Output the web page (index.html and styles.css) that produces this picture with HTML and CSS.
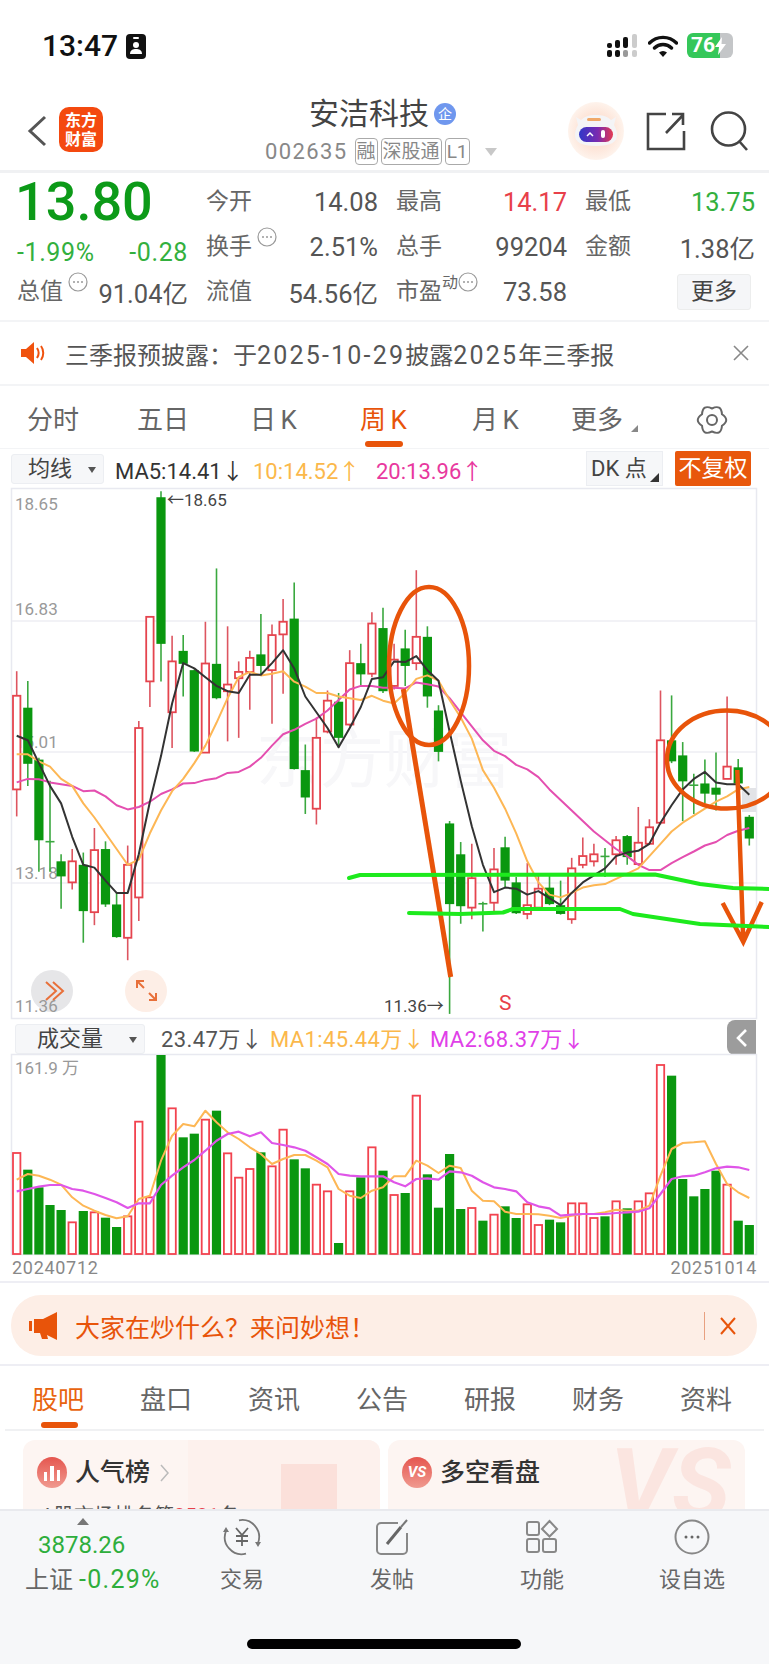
FILE: index.html
```html
<!DOCTYPE html>
<html lang="zh-CN">
<head>
<meta charset="UTF-8" />
<meta name="viewport" content="width=device-width, initial-scale=1" />
<title>安洁科技 002635</title>
<link rel="stylesheet" href="styles.css">
</head>
<body>

<svg class="defs" width="0" height="0">
  <symbol id="dots" viewBox="0 0 20 20">
    <circle cx="10" cy="10" r="9" fill="none" stroke="#999" stroke-width="1.2"/>
    <circle cx="6" cy="10" r="1" fill="#999"/><circle cx="10" cy="10" r="1" fill="#999"/><circle cx="14" cy="10" r="1" fill="#999"/>
  </symbol>
  <defs>
    <radialGradient id="peach"><stop offset="0.55" stop-color="#fde3d6"/><stop offset="1" stop-color="#fef3ec"/></radialGradient>
    <linearGradient id="visor"><stop offset="0" stop-color="#3038c8"/><stop offset="0.55" stop-color="#7a2ab0"/><stop offset="1" stop-color="#e33a52"/></linearGradient>
  </defs>
</svg>

<div class="phone">
  <div class="status">
    <div class="clock">
      <span>13:47</span>
      <svg width="20" height="25" viewBox="0 0 20 25"><rect width="20" height="25" rx="4" fill="#111"/><rect x="7" y="3" width="6" height="2" rx="1" fill="#fff"/><circle cx="10" cy="11" r="3" fill="#fff"/><path d="M4 20c0-4 3-5 6-5s6 1 6 5z" fill="#fff"/></svg>
    </div>
    <div class="status-right">
      <svg width="32" height="23" viewBox="0 0 32 23">
        <rect x="0" y="9" width="5" height="5" rx="2" fill="#111"/><rect x="8" y="6" width="5" height="8" rx="2" fill="#111"/><rect x="16" y="3" width="5" height="11" rx="2" fill="#111"/><rect x="25" y="0" width="5" height="14" rx="2" fill="#ccc"/>
        <rect x="0" y="16" width="5" height="7" rx="2" fill="#111"/><rect x="8" y="16" width="5" height="7" rx="2" fill="#111"/><rect x="16" y="16" width="5" height="7" rx="2" fill="#999"/><rect x="25" y="16" width="5" height="7" rx="2" fill="#ccc"/>
      </svg>
      <svg width="30" height="22" viewBox="0 0 30 22"><path d="M1.5 8a19 19 0 0 1 27 0M6.5 13a12 12 0 0 1 17 0" fill="none" stroke="#111" stroke-width="3.4" stroke-linecap="round"/><path d="M11 17.5a6 6 0 0 1 8 0L15 22z" fill="#111"/></svg>
      <div class="battery"><b>76</b><svg width="11" height="18" viewBox="0 0 11 18"><path d="M7 0 0 10h4l-1 8 8-11H6.500z" fill="#fff"/></svg></div>
    </div>
  </div>

  <header class="nav">
    <svg class="back" width="20" height="32" viewBox="0 0 20 32"><path d="M18 2 3 16l15 14" fill="none" stroke="#555" stroke-width="3"/></svg>
    <div class="logo"><div>东方</div><div>财富</div></div>
    <div class="stock">
      <div class="stock-name">安洁科技<span class="badge">企</span></div>
      <div class="stock-code">002635<span class="tag">融</span><span class="tag">深股通</span><span class="tag">L1</span><i class="caret"></i></div>
    </div>
    <div class="nav-icons">
      <svg class="avatar" width="58" height="58" viewBox="0 0 58 58"><ellipse cx="29" cy="29" rx="28" ry="29" fill="url(#peach)"/><path d="M9 15l5 3c4-4 9-5 15-5s11 1 15 5l5-3-2 8c2 3 3 7 3 10 0 7-6 11-21 11S8 40 8 33c0-3 1-7 3-10z" fill="#f4f4f6"/><rect x="20" y="16" width="14" height="3" rx="1.500" fill="#f0a868"/><rect x="12" y="25" width="34" height="15" rx="7.500" fill="url(#visor)"/><path d="M20 34l3-3 3 3" fill="none" stroke="#fff" stroke-width="1.500"/><rect x="34" y="28" width="4" height="8" rx="2" fill="#fff"/></svg>
      <svg width="40" height="40" viewBox="0 0 40 40"><path d="M20 3H2v35h36V20M20 22 37 4M26 3h11v11" fill="none" stroke="#444" stroke-width="2.600"/></svg>
      <svg width="40" height="40" viewBox="0 0 40 40"><circle cx="18.500" cy="18" r="16.500" fill="none" stroke="#444" stroke-width="2.600"/><path d="m29 30 8 9" stroke="#444" stroke-width="2.600"/></svg>
    </div>
  </header>

  <section class="quote">
    <div class="price">13.80</div>
    <div class="cell"><span>今开</span><b>14.08</b></div>
    <div class="cell"><span>最高</span><b class="up">14.17</b></div>
    <div class="cell"><span>最低</span><b class="down">13.75</b></div>
    <div class="change"><span>-1.99%</span><span>-0.28</span></div>
    <div class="cell"><span>换手<svg class="dots"><use href="#dots"/></svg></span><b>2.51%</b></div>
    <div class="cell"><span>总手</span><b>99204</b></div>
    <div class="cell"><span>金额</span><b>1.38亿</b></div>
    <div class="cell"><span>总值<svg class="dots"><use href="#dots"/></svg></span><b>91.04亿</b></div>
    <div class="cell"><span>流值</span><b>54.56亿</b></div>
    <div class="cell"><span>市盈<sup>动</sup><svg class="dots tight"><use href="#dots"/></svg></span><b>73.58</b></div>
    <div class="cell more-cell"><button class="more">更多</button></div>
  </section>

  <div class="notice">
    <svg width="26" height="24" viewBox="0 0 26 24"><path d="M1 8h5l8-7v22l-8-7H1z" fill="#f0520e"/><path d="M17 7c2 3 2 7 0 10M21 5c3 4 3 10 0 14" fill="none" stroke="#f0520e" stroke-width="2"/></svg>
    <span class="notice-text">三季报预披露：于<span>2025-10-29</span>披露<span>2025</span>年三季报</span>
    <svg width="16" height="16" viewBox="0 0 16 16"><path d="m1 1 14 14M15 1 1 15" stroke="#888" stroke-width="1.600"/></svg>
  </div>

  <nav class="periods">
    <a>分时</a><a>五日</a><a>日 K</a><a class="on">周 K</a><a>月 K</a><a class="has-caret">更多</a>
    <svg class="gear" width="32" height="32" viewBox="0 0 32 32"><path d="M25.960 10.250Q34.500 16 25.960 21.750Q25.250 32 16 27.500Q6.750 32 6.040 21.750Q-2.500 16 6.040 10.250Q6.750 0 16 4.500Q25.250 0 25.960 10.250Z" fill="none" stroke="#666" stroke-width="2"/><circle cx="16" cy="16" r="5" fill="none" stroke="#666" stroke-width="2"/></svg>
  </nav>

  <div class="ma-row">
    <div class="select ma-select">均线<i></i></div>
    <span class="ma-black">MA5:14.41↓</span>
    <span class="ma-orange">10:14.52↑</span>
    <span class="ma-pink">20:13.96↑</span>
    <div class="dk">DK 点</div>
    <div class="fq">不复权</div>
  </div>

  <div class="chart"><svg id="kline" width="769" height="531" viewBox="0 489 769 531"></svg></div>

  <div class="vol-row">
    <div class="select vol-select">成交量<i></i></div>
    <span class="vol-now">23.47万↓</span>
    <span class="vol-ma1">MA1:45.44万↓</span>
    <span class="vol-ma2">MA2:68.37万↓</span>
    <div class="collapse"><svg width="12" height="20" viewBox="0 0 12 20"><path d="M10 2 2 10l8 8" fill="none" stroke="#fff" stroke-width="2.600"/></svg></div>
  </div>

  <div class="chart"><svg id="volume" width="769" height="202" viewBox="0 1055 769 202"></svg></div>

  <div class="dates"><span>20240712</span><span>20251014</span></div>

  <div class="banner-wrap">
    <div class="banner">
      <svg width="30" height="28" viewBox="0 0 30 28"><rect x="0" y="9" width="3" height="10" fill="#e8540a"/><path d="M5 7h9L28 0v28L18 23l1 4h-6l-2-6H5z" fill="#e8540a"/></svg>
      <span class="banner-text">大家在炒什么？来问妙想！</span>
      <i class="banner-sep"></i>
      <svg width="18" height="20" viewBox="0 0 18 20"><path d="m2 2 14 16M16 2 2 18" stroke="#e8540a" stroke-width="2"/></svg>
    </div>
  </div>

  <nav class="tabs">
    <a class="on">股吧</a><a>盘口</a><a>资讯</a><a>公告</a><a>研报</a><a>财务</a><a>资料</a>
  </nav>

  <div class="cards">
    <div class="card">
      <i class="card-art art-fade"></i>
      <i class="card-art art-bars"></i>
      <div class="card-head">
        <span class="round"><svg width="18" height="16" viewBox="0 0 18 16"><path d="M1 7h3v9H1zM7 1h4v15H7zM14 5h3v11h-3z" fill="#fff"/></svg></span>
        人气榜<svg class="chev" width="9" height="18" viewBox="0 0 9 18"><path d="m1 1 7 8-7 8" fill="none" stroke="#bbb" stroke-width="1.500"/></svg>
      </div>
      <p class="card-note">A股市场排名第<em>3581</em>名</p>
    </div>
    <div class="card">
      <i class="card-art art-vs">VS</i>
      <div class="card-head">
        <span class="round vs">VS</span>
        多空看盘
      </div>
    </div>
  </div>

  <footer class="dock">
    <div class="index">
      <i class="index-tri"></i>
      <div class="index-val">3878.26</div>
      <div class="index-name">上证 <span>-0.29%</span></div>
    </div>
    <a class="dock-item">
      <svg width="40" height="40" viewBox="0 0 40 40"><path d="M17 3.300A17 17 0 0 1 36 26M24 36.700A17 17 0 0 1 4 14" fill="none" stroke="#777" stroke-width="1.800"/><path d="M33 25h6l-3 5zM1 15h6l-3-5z" fill="#777"/><path d="m14 11 6 7 6-7M20 18v11M14 19h12M14 24h12" fill="none" stroke="#666" stroke-width="1.800"/></svg>
      <span>交易</span>
    </a>
    <a class="dock-item">
      <svg width="36" height="40" viewBox="0 0 36 40"><path d="M24 6H7a4 4 0 0 0-4 4v23a4 4 0 0 0 4 4h22a4 4 0 0 0 4-4V16" fill="none" stroke="#888" stroke-width="2"/><path d="m13 27 14-17" stroke="#666" stroke-width="3"/><path d="m27 10 6-7" stroke="#777" stroke-width="2"/></svg>
      <span>发帖</span>
    </a>
    <a class="dock-item">
      <svg width="34" height="40" viewBox="0 0 34 40"><g fill="none" stroke="#888" stroke-width="2"><rect x="2" y="5" width="12" height="13" rx="2"/><rect x="2" y="22" width="12" height="13" rx="2"/><rect x="18" y="22" width="13" height="13" rx="2"/><path d="m24.500 4 7.500 8-7.500 7.500-7.500-7.500z"/></g></svg>
      <span>功能</span>
    </a>
    <a class="dock-item">
      <svg width="36" height="40" viewBox="0 0 36 40"><circle cx="18" cy="20" r="16.500" fill="none" stroke="#888" stroke-width="2"/><circle cx="12" cy="20" r="1.500" fill="#666"/><circle cx="18" cy="20" r="1.500" fill="#666"/><circle cx="24" cy="20" r="1.500" fill="#666"/></svg>
      <span>设自选</span>
    </a>
    <i class="home-bar"></i>
  </footer>
</div>

<script src="chart.js"></script>
</body>
</html>
```

FILE: styles.css
```css
* {
  box-sizing: border-box;
}
body {
  margin: 0;
  background: white;
  color: #444;
  font-family: Roboto, 'Noto Sans CJK SC', sans-serif;
}
.defs {
  position: absolute;
}
.phone {
  width: 769px;
  height: 1664px;
  display: flex;
  flex-direction: column;
  overflow: hidden;
}
/* Status bar */
.status {
  height: 95px;
  padding: 33px 36px 0 42px;
  display: flex;
  justify-content: space-between;
  align-items: flex-start;
}
.clock {
  display: flex;
  align-items: center;
  gap: 8px;
  color: #111;
  font-size: 30px;
  font-weight: 500;
  line-height: 26px;
}
.status-right {
  display: flex;
  align-items: center;
  gap: 9px;
}
.battery {
  width: 46px;
  height: 25px;
  padding-left: 4px;
  border-radius: 6px;
  background: linear-gradient(90deg, #35c75a 72%, #c4c6c8 72%);
  display: flex;
  align-items: center;
  color: white;
  font-size: 21px;
  line-height: 25px;
}
/* Title bar */
.nav {
  height: 78px;
  padding-left: 27px;
  padding-right: 19px;
  border-bottom: 3px solid #f0f1f3;
  display: flex;
  align-items: flex-start;
  position: relative;
}
.back {
  margin-top: 20px;
}
.logo {
  margin-left: 12px;
  margin-top: 12px;
  width: 44px;
  height: 45px;
  border-radius: 10px;
  background: #f4490f;
  color: white;
  font-family: 'Noto Sans CJK SC', sans-serif;
  font-size: 16px;
  font-weight: 700;
  text-align: center;
  padding-top: 3px;
}
.logo div {
  height: 19px;
  line-height: 19px;
}
.stock {
  position: absolute;
  left: 265px;
  top: 0;
}
.stock-name {
  padding-left: 44px;
  font-size: 30px;
  line-height: 40px;
  margin-top: -1px;
  display: flex;
  align-items: center;
  color: #444;
}
.badge {
  width: 22px;
  height: 22px;
  margin-left: 5px;
  border-radius: 50%;
  background: #6f97ee;
  color: white;
  font-size: 14px;
  line-height: 22px;
  text-align: center;
}
.stock-code {
  display: flex;
  align-items: center;
  gap: 3px;
  margin-top: 4px;
  color: #888;
  font-size: 22px;
  letter-spacing: 1.4px;
  line-height: 27px;
}
.tag {
  height: 27px;
  padding: 0 1px;
  border: 1px solid #aaa;
  border-radius: 4px;
  color: #888;
  font-size: 19px;
  letter-spacing: 0;
  line-height: 25px;
}
.tag:first-of-type {
  margin-left: 4px;
}
.caret {
  margin-left: 12px;
  border: 6px solid transparent;
  border-top: 8px solid #c8c8c8;
  border-bottom: 0;
}
.nav-icons {
  margin-left: auto;
  margin-top: 7px;
  display: flex;
  align-items: center;
  gap: 24px;
}
.avatar {
  margin-right: -3px;
}
/* Quote */
.quote {
  height: 149px;
  padding: 6px 14px 0 17px;
  border-bottom: 2px solid #f3f4f6;
  display: grid;
  grid-template-columns: 171px 172px 171px 170px;
  grid-template-rows: 45px 45px 45px;
  column-gap: 18px;
  align-items: center;
}
.price {
  margin-left: -2px;
  color: #0c9a18;
  font-size: 54px;
  font-weight: 500;
  line-height: 45px;
}
.change {
  display: flex;
  justify-content: space-between;
  padding-top: 12px;
  color: #33b03e;
  font-size: 25px;
  letter-spacing: 0.6px;
}
.cell {
  display: flex;
  justify-content: space-between;
  align-items: center;
  font-size: 23px;
  color: #666;
}
.cell b {
  font-weight: 400;
  color: #555;
  font-size: 25.500px;
}
.cell span {
  display: flex;
  align-items: flex-start;
  line-height: 30px;
}
.cell sup {
  font-size: 16px;
  line-height: 20px;
  margin-top: -4px;
}
.cell b.up {
  color: #e8404a;
}
.cell b.down {
  color: #33b03e;
}
.dots {
  width: 20px;
  height: 20px;
  margin-left: 5px;
  margin-top: -5px;
}
.dots.tight {
  margin-left: 0;
}
.more-cell {
  justify-content: flex-end;
}
.more {
  width: 74px;
  height: 36px;
  margin-right: 4px;
  padding: 0;
  border: 1px solid #eceded;
  border-radius: 3px;
  background: #f5f6f8;
  color: #444;
  font: inherit;
  font-size: 23px;
  line-height: 34px;
}
/* Notice */
.notice {
  height: 64px;
  padding: 0 20px;
  border-bottom: 2px solid #f3f4f6;
  display: flex;
  align-items: center;
  gap: 19px;
}
.notice-text {
  flex: 1;
  font-size: 24px;
  color: #555;
}
.notice-text span {
  font-size: 25px;
  letter-spacing: 2.200px;
}
/* Period tabs */
.periods {
  height: 63px;
  position: relative;
  display: grid;
  grid-template-columns: 110px 113px 110px 112px 99px 120px;
  padding-left: 27px;
  align-items: center;
  font-size: 26px;
  word-spacing: -2px;
  color: #666;
  border-bottom: 1px solid #f3f4f6;
}
.periods a.on {
  color: #e8540a;
  position: relative;
}
.periods a.on::after {
  content: '';
  position: absolute;
  left: 5px;
  top: 42px;
  width: 38px;
  height: 6px;
  border-radius: 3px;
  background: #e8540a;
}
.has-caret {
  position: relative;
}
.has-caret::after {
  content: '';
  position: absolute;
  left: 60px;
  bottom: 4px;
  border-left: 7px solid transparent;
  border-bottom: 7px solid #888;
}
.gear {
  position: absolute;
  left: 696px;
  top: 18px;
}
/* MA row */
.ma-row {
  height: 39px;
  padding-left: 11px;
  display: flex;
  align-items: center;
  font-size: 22px;
}
.select {
  height: 30px;
  border: 1px solid #eceef2;
  border-radius: 3px;
  background: #f6f7f9;
  position: relative;
  color: #444;
  font-size: 22px;
  line-height: 28px;
}
.select i {
  position: absolute;
  right: 7px;
  top: 12px;
  border: 4px solid transparent;
  border-top: 6px solid #555;
  border-bottom: 0;
}
.ma-select {
  width: 93px;
  padding-left: 16px;
}
.ma-black {
  margin-left: 11px;
  width: 138px;
  color: #333;
}
.ma-orange {
  width: 123px;
  color: #fbb84b;
}
.ma-pink {
  width: 210px;
  color: #e8389e;
}
.dk {
  width: 77px;
  height: 35px;
  border: 1px solid #eceef2;
  background: #f6f7f9;
  color: #444;
  line-height: 34px;
  padding-left: 4px;
  position: relative;
}
.dk::after {
  content: '';
  position: absolute;
  right: 3px;
  bottom: 3px;
  border-left: 9px solid transparent;
  border-bottom: 9px solid #333;
}
.fq {
  width: 76px;
  height: 35px;
  margin-left: 12px;
  border-radius: 2px;
  background: #e8570c;
  color: white;
  font-size: 23px;
  line-height: 35px;
  text-align: center;
}
/* Charts */
.chart svg {
  display: block;
  overflow: visible;
}
.chart {
  position: relative;
  z-index: 1;
}
.vol-row {
  height: 35px;
  padding-left: 15px;
  display: flex;
  align-items: center;
  font-size: 22px;
  letter-spacing: 0.4px;
  position: relative;
}
.vol-select {
  width: 130px;
  margin-top: 4px;
  padding-left: 21px;
  letter-spacing: 0;
}
.vol-now {
  margin-left: 16px;
  width: 109px;
  color: #555;
}
.vol-ma1 {
  width: 160px;
  color: #fbb84b;
}
.vol-ma2 {
  color: #e040e8;
}
.collapse {
  position: absolute;
  left: 727px;
  top: 1px;
  width: 29px;
  height: 35px;
  border-radius: 8px 0 0 8px;
  background: #9c9c9c;
  display: flex;
  align-items: center;
  justify-content: center;
}
.dates {
  height: 27px;
  padding: 0 12px 0 12px;
  border-bottom: 2px solid #eeeef4;
  display: flex;
  justify-content: space-between;
  color: #888;
  font-size: 18px;
  letter-spacing: 0.7px;
  line-height: 24px;
}
/* Ask banner */
.banner-wrap {
  height: 83px;
  padding: 12px 12px 0 11px;
  border-bottom: 2px solid #eeeef4;
}
.banner {
  height: 61px;
  padding: 0 20px 0 18px;
  border-radius: 30px;
  background: #fdeee6;
  display: flex;
  align-items: center;
  color: #e8540a;
}
.banner-text {
  margin-left: 16px;
  flex: 1;
  font-size: 25px;
}
.banner-sep {
  width: 1px;
  height: 28px;
  margin-right: 14px;
  background: #e8a080;
}
/* Info tabs */
.tabs {
  height: 65px;
  margin: 0 5px;
  padding-left: 27px;
  border-bottom: 2px solid #f0f1f3;
  display: flex;
  gap: 54px;
  align-items: center;
  font-size: 26px;
  color: #666;
}
.tabs a {
  position: relative;
  margin-top: -1px;
  width: 54px;
  white-space: nowrap;
}
.tabs a.on {
  color: #e8640f;
}
.tabs a.on::after {
  content: '';
  position: absolute;
  left: 9px;
  top: 43px;
  width: 37px;
  height: 6px;
  border-radius: 3px;
  background: #e8540a;
}
.cards {
  flex: 1;
  min-height: 0;
  padding: 9px 23px 0;
  display: flex;
  gap: 8px;
  overflow: hidden;
}
.card {
  position: relative;
  height: 110px;
  width: 357px;
  padding: 17px 14px;
  border-radius: 12px 12px 0 0;
  background: #fdf5f2;
  overflow: hidden;
}
.card-head {
  position: relative;
  display: flex;
  align-items: center;
  gap: 8px;
  color: #333;
  font-size: 25px;
  font-weight: 500;
  line-height: 31px;
}
.round {
  width: 30px;
  height: 31px;
  border-radius: 50%;
  background: linear-gradient(#e5564f, #f09a90);
  display: flex;
  align-items: center;
  justify-content: center;
}
.round.vs {
  color: white;
  font-size: 15px;
  font-style: italic;
  font-weight: 700;
}
.chev {
  margin-left: 2px;
}
.card-note {
  position: relative;
  margin: 16px 0 0 4px;
  color: #555;
  font-size: 20px;
  line-height: 24px;
}
.card-note em {
  color: #e8404a;
  font-style: normal;
}
.card-art {
  position: absolute;
  font-style: normal;
}
.art-fade {
  left: 165px;
  right: 0;
  top: 0;
  bottom: 0;
  background: #fdf1ed;
}
.art-bars {
  left: 258px;
  top: 24px;
  width: 56px;
  height: 50px;
  background: #fbe0da;
}
.art-vs {
  left: 222px;
  top: -4px;
  color: #fbe5e0;
  font-size: 98px;
  font-style: italic;
  font-weight: 700;
  line-height: 98px;
}
/* Bottom dock */
.dock {
  position: relative;
  z-index: 2;
  height: 155px;
  flex: none;
  border-top: 2px solid #e9eaee;
  background: #f6f7f9;
  display: grid;
  grid-template-columns: 167px 150px 150px 150px 150px;
  padding-left: 0;
}
.index {
  padding-left: 25px;
  position: relative;
}
.index-tri {
  position: absolute;
  left: 77px;
  top: 7px;
  border-left: 6px solid transparent;
  border-right: 6px solid transparent;
  border-bottom: 7px solid #777;
}
.index-val {
  margin-top: 19px;
  padding-left: 13px;
  color: #2eae3c;
  font-size: 24px;
  line-height: 30px;
}
.index-name {
  margin-top: 3px;
  color: #666;
  font-size: 24px;
  line-height: 33px;
  white-space: nowrap;
}
.index-name span {
  color: #2eae3c;
  font-size: 25px;
  letter-spacing: 1.300px;
}
.dock-item {
  display: flex;
  flex-direction: column;
  align-items: center;
  padding-top: 6px;
  color: #666;
  font-size: 22px;
  line-height: 30px;
}
.dock-item span {
  margin-top: 8px;
}
.home-bar {
  position: absolute;
  left: 247px;
  top: 128px;
  width: 274px;
  height: 10px;
  border-radius: 5px;
  background: #000;
}
```

FILE: chart.js
```js
const NS = 'http://www.w3.org/2000/svg';
const RED = '#e5444e';
const GREEN = '#0a970f';

// x of candle i, y values below were read off the picture
const cx = i => 16.7 + 11.1 * i;
const ky = v => 480 + v / 2.851;
const vy = v => 1020 + v / 3;

// type, wick top, body top, body bottom, wick bottom
const candles = [
  ['r',548,618,885,962],['g',576,652,812,875],['g',795,800,1030,1120],['g',860,1034,1038,1120],
  ['g',1070,1090,1133,1225],['r',1055,1090,1150,1170],['g',1065,1100,1232,1322],['r',995,1058,1235,1272],
  ['g',1033,1055,1213,1220],['g',1180,1213,1306,1308],['r',1045,1100,1308,1372],['r',690,710,1193,1260],
  ['r',393,393,577,650],['g',35,52,470,577],['r',447,520,665,767],['g',445,490,527,620],
  ['g',543,545,777,778],['r',407,526,780,780],['g',255,527,625,628],['r',420,586,605,748],
  ['r',520,550,568,738],['r',490,510,550,658],['g',385,500,533,560],['r',415,445,545,698],
  ['r',342,407,443,612],['g',295,398,827,828],['g',757,830,908,955],['r',680,738,940,985],
  ['r',603,632,720,725],['g',610,635,738,765],['r',488,525,700,705],['g',470,525,557,590],
  ['r',380,412,555,565],['g',367,425,605,610],['r',470,515,590,600],['g',430,483,533,590],
  ['r',260,450,525,545],['g',420,450,620,652],['g',645,660,778,805],['g',975,982,1212,1525],
  ['g',1035,1070,1218,1268],['r',1040,1138,1222,1255],['g',1205,1211,1215,1290],['r',1052,1113,1208,1238],
  ['g',1020,1050,1145,1165],['g',1135,1150,1238,1240],['r',1095,1215,1240,1255],['r',1130,1168,1222,1225],
  ['g',1130,1165,1212,1215],['g',1145,1215,1240,1242],['r',1080,1110,1255,1268],['r',1022,1075,1100,1110],
  ['r',1040,1070,1090,1105],['g',1052,1076,1080,1135],['r',1018,1030,1070,1100],['g',1015,1018,1078,1100],
  ['r',935,1037,1098,1100],['r',970,993,1040,1040],['r',603,745,980,985],['g',617,745,805,810],
  ['g',750,788,862,975],['g',840,873,877,955],['g',800,868,897,925],['g',780,880,900,945],
  ['r',620,820,855,855],['g',798,822,868,870],['g',958,963,1025,1045]
];

const ma5 = [732,745,810,875,925,1020,1100,1108,1145,1180,1180,1070,920,790,640,525,540,565,590,605,610,558,558,525,488,540,620,665,710,765,710,650,570,565,
  520,522,505,545,575,720,860,990,1100,1178,1165,1168,1185,1175,1195,1215,1180,1150,1130,1110,1075,1065,1060,1040,980,930,885,855,835,865,870,870,900];
const ma10 = [785,785,805,820,855,875,925,965,1010,1055,1100,1085,1010,945,890,855,810,760,695,625,565,550,560,555,548,578,592,610,610,620,625,630,618,632,
  640,610,570,560,575,630,680,740,830,880,940,1010,1090,1150,1185,1193,1180,1165,1158,1155,1140,1125,1110,1075,1040,1005,980,960,940,920,905,885,878];
const ma20 = [865,855,856,865,870,875,890,888,905,930,942,935,920,898,885,868,867,858,853,838,835,820,795,760,728,715,698,683,660,630,600,590,590,595,
  595,597,580,585,592,625,665,705,745,775,790,815,828,850,885,915,945,975,1005,1030,1055,1075,1100,1115,1115,1095,1078,1062,1045,1035,1015,1003,995];

const volTops = [402,452,505,558,573,610,576,580,596,624,592,308,535,108,268,355,344,302,275,403,476,450,400,442,332,421,448,497,517,672,517,475,385,455,
  528,522,230,466,566,405,570,567,605,587,562,597,556,618,602,610,553,553,597,592,547,568,547,523,138,170,480,532,510,455,497,605,618];
const volMa1 = [482,465,470,482,497,535,560,575,588,598,592,540,530,425,350,315,322,275,310,340,360,385,405,435,420,408,408,425,445,510,530,537,515,505,
  472,472,425,440,462,440,447,515,545,547,578,585,585,586,590,597,590,585,585,580,572,575,575,560,470,390,372,370,367,435,495,520,537];
const volMa2 = [517,510,503,498,498,510,515,525,537,550,567,553,553,498,470,445,423,395,365,345,338,352,340,372,378,385,395,415,435,465,470,472,472,472,
  490,502,480,478,482,457,460,470,490,505,510,517,550,562,568,590,587,585,585,585,582,580,578,568,525,480,472,470,460,448,443,445,453];

function add(svg, tag, attrs, text) {
  const el = document.createElementNS(NS, tag);
  for (const k in attrs) el.setAttribute(k, attrs[k]);
  if (text) el.textContent = text;
  svg.appendChild(el);
  return el;
}

function line(svg, values, toY, color, width) {
  const points = values.map((v, i) => cx(i).toFixed(1) + ',' + toY(v).toFixed(1)).join(' ');
  add(svg, 'polyline', {points, fill: 'none', stroke: color, 'stroke-width': width, 'stroke-linejoin': 'round'});
}

function label(svg, x, y, text, color, size, anchor) {
  add(svg, 'text', {x, y, fill: color, 'font-size': size, 'text-anchor': anchor || 'start'}, text);
}

function drawKline(svg) {
  add(svg, 'rect', {x: 11.5, y: 489.5, width: 745, height: 530, fill: 'white', stroke: '#e8e9f0', 'stroke-width': 1.5});
  [622, 753, 884].forEach(y => add(svg, 'line', {x1: 12, x2: 756, y1: y, y2: y, stroke: '#eeeef3', 'stroke-width': 1.5}));
  label(svg, 384, 783, '东方财富', '#f7f7f9', 64, 'middle');

  add(svg, 'circle', {cx: 52, cy: 992, r: 21, fill: '#e6e6e8'});
  add(svg, 'circle', {cx: 146, cy: 992, r: 21, fill: '#fdeee6'});

  label(svg, 15, 511, '18.65', '#999', 17);
  label(svg, 15, 616, '16.83', '#999', 17);
  label(svg, 15, 749, '15.01', '#999', 17);
  label(svg, 15, 880, '13.18', '#999', 17);
  label(svg, 15, 1013, '11.36', '#999', 17);

  // hover handle on the right edge
  add(svg, 'rect', {x: 742, y: 789, width: 14, height: 24, fill: '#e2e3e7'});

  candles.forEach((c, i) => {
    const x = cx(i);
    const isRed = c[0] === 'r';
    add(svg, 'line', {x1: x, x2: x, y1: ky(c[1]), y2: ky(c[4]), stroke: isRed ? '#dd5560' : '#3aa83f', 'stroke-width': 1.6});
    if (c[3] - c[2] < 8) {
      add(svg, 'line', {x1: x - 4.5, x2: x + 4.5, y1: ky(c[2]), y2: ky(c[2]), stroke: '#3aa83f', 'stroke-width': 1.6});
    } else if (isRed) {
      add(svg, 'rect', {x: x - 3.7, y: ky(c[2]), width: 7.4, height: ky(c[3]) - ky(c[2]), fill: 'white', stroke: RED, 'stroke-width': 1.8});
    } else {
      add(svg, 'rect', {x: x - 4.6, y: ky(c[2]), width: 9.2, height: ky(c[3]) - ky(c[2]), fill: GREEN});
    }
  });

  line(svg, ma20, ky, '#e44fb0', 2);
  line(svg, ma10, ky, '#fdb755', 2);
  line(svg, ma5, ky, '#333', 2);

  label(svg, 167, 507, '←18.65', '#444', 17);
  label(svg, 384, 1013, '11.36→', '#444', 17);
  label(svg, 499, 1011, 'S', '#e8404a', 21);

  add(svg, 'path', {d: 'M46 983l10 9-10 9M53 983l10 9-10 9', fill: 'none', stroke: '#e8703a', 'stroke-width': 2});
  add(svg, 'path', {d: 'M137 989v-7h7M137 982l7 7M156 994v7h-7M156 1001l-7-7', fill: 'none', stroke: '#e8703a', 'stroke-width': 2});

  // hand drawn marks over the chart
  const mark = {fill: 'none', stroke: '#e8540a', 'stroke-width': 4.5};
  add(svg, 'ellipse', Object.assign({cx: 429, cy: 667, rx: 40, ry: 79}, mark));
  add(svg, 'ellipse', Object.assign({cx: 727, cy: 760.5, rx: 60, ry: 49}, mark));
  add(svg, 'path', Object.assign({d: 'M403.3 690 450.7 978'}, mark, {'stroke-width': 5}));
  add(svg, 'path', Object.assign({d: 'M737.3 771 743.3 943M722.7 904 743.3 943 761.7 903'}, mark));
  const green = {fill: 'none', stroke: '#1dea1d', 'stroke-width': 4, 'stroke-linecap': 'round', 'stroke-linejoin': 'round'};
  add(svg, 'polyline', Object.assign({points: '349,879 360,876 655,875.500 700,885 733,889 769,890'}, green));
  add(svg, 'polyline', Object.assign({points: '409,914 460,915 503,913.500 513,910 620,910 633,915 700,925 769,928'}, green));
}

function drawVolume(svg) {
  add(svg, 'rect', {x: 11.5, y: 1055.5, width: 745, height: 200, fill: 'white', stroke: '#e8e9f0', 'stroke-width': 1.5});
  label(svg, 15, 1075, '161.9 万', '#999', 17);
  volTops.forEach((top, i) => {
    const x = cx(i);
    const y = vy(top);
    if (candles[i][0] === 'r') {
      add(svg, 'rect', {x: x - 3.7, y, width: 7.4, height: 1255 - y, fill: 'white', stroke: '#f2434f', 'stroke-width': 1.8});
    } else {
      add(svg, 'rect', {x: x - 4.6, y, width: 9.2, height: 1255.500 - y, fill: GREEN});
    }
  });
  line(svg, volMa1, vy, '#fdb755', 2);
  line(svg, volMa2, vy, '#df55e8', 2.2);
}

drawKline(document.getElementById('kline'));
drawVolume(document.getElementById('volume'));
```
